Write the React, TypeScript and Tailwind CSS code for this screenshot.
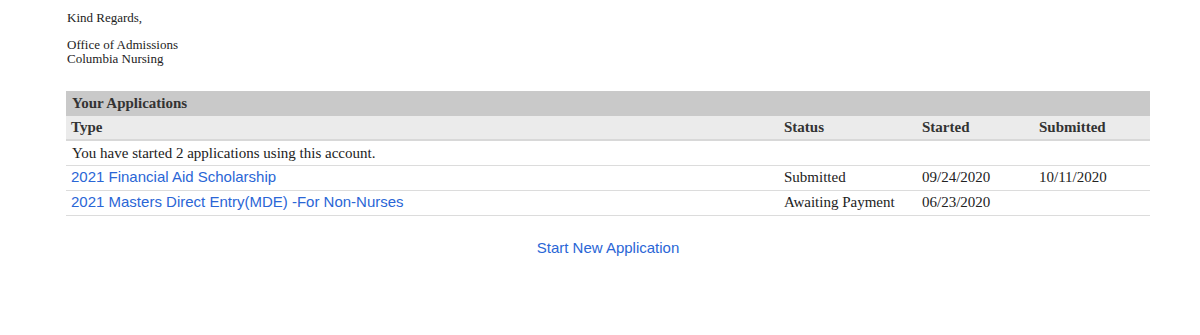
const apps = [
  { name: "2021 Financial Aid Scholarship", status: "Submitted", started: "09/24/2020", submitted: "10/11/2020" },
  { name: "2021 Masters Direct Entry(MDE) -For Non-Nurses", status: "Awaiting Payment", started: "06/23/2020", submitted: "" },
];

const App = () => {
  return (
    <div className="min-h-[335px] bg-white text-[#222] font-['Liberation_Serif',serif]">
      <div className="pl-[67px] pt-[11px] text-[13px] leading-[14px]">
        <p>Kind Regards,</p>
        <p className="mt-[13px]">Office of Admissions</p>
        <p>Columbia Nursing</p>
      </div>

      <div className="ml-[66px] mr-[50px] mt-[25px]">
        <div className="h-[25px] bg-[#c9c9c9] pl-[6px] flex items-center font-bold text-[15px] text-[#333]">
          Your Applications
        </div>
        <table className="w-full border-collapse text-[15px]">
          <thead>
            <tr className="bg-[#ebebeb] border-b-2 border-[#d8d8d8] h-[24px] text-left text-[#333]">
              <th className="pl-[5px] font-bold">Type</th>
              <th className="w-[138px] font-bold">Status</th>
              <th className="w-[117px] font-bold">Started</th>
              <th className="w-[111px] font-bold">Submitted</th>
            </tr>
          </thead>
          <tbody>
            <tr className="h-[25px] border-b border-[#dcdcdc]">
              <td className="pl-[6px]" colSpan={4}>You have started 2 applications using this account.</td>
            </tr>
            {apps.map((a) => (
              <tr key={a.name} className="h-[25px] border-b border-[#dcdcdc]">
                <td className="pl-[5px]">
                  <a href="#" className="text-[#2a66d6] font-['Liberation_Sans',sans-serif]">{a.name}</a>
                </td>
                <td>{a.status}</td>
                <td>{a.started}</td>
                <td>{a.submitted}</td>
              </tr>
            ))}
          </tbody>
        </table>
        <div className="mt-[20px] text-center">
          <a href="#" className="text-[#2a66d6] text-[15px] font-['Liberation_Sans',sans-serif]">Start New Application</a>
        </div>
      </div>
    </div>
  );
};

export default App;
